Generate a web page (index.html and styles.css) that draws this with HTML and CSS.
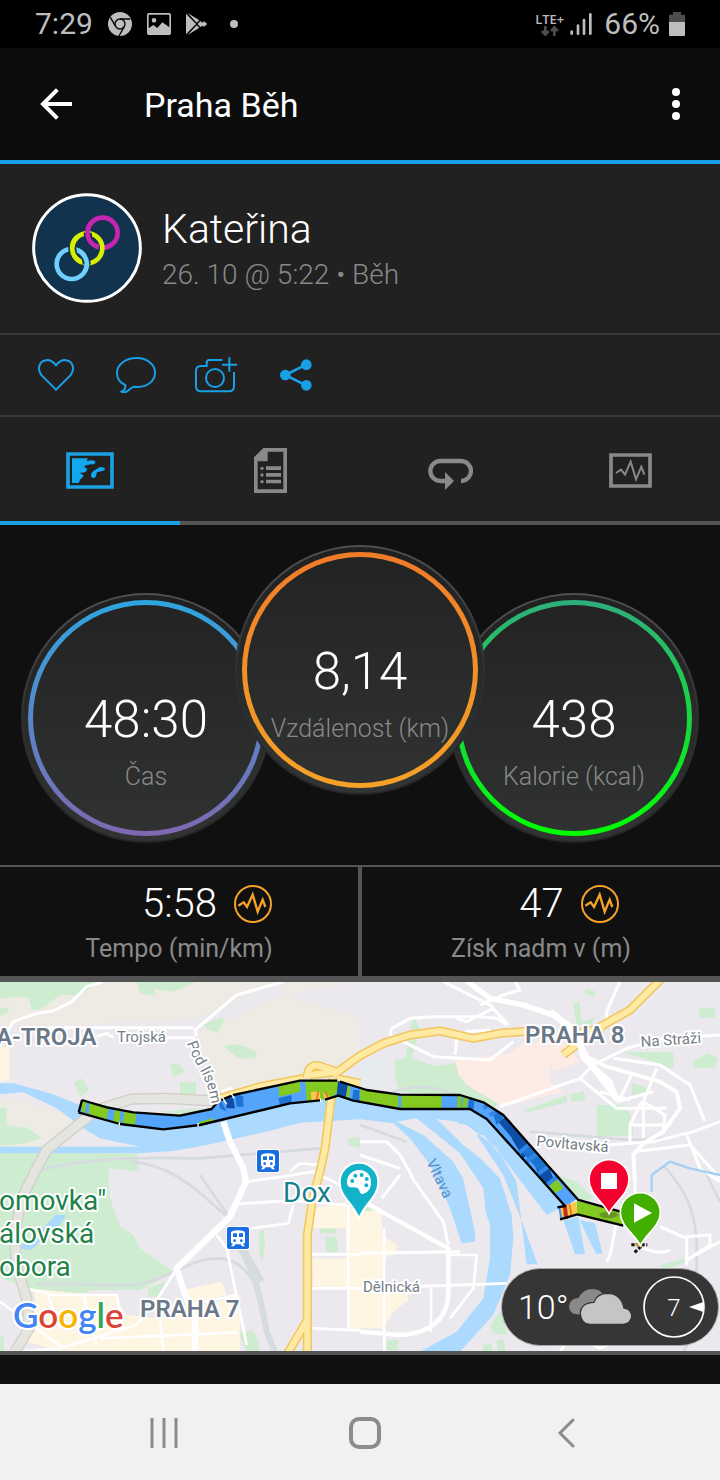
FILE: index.html
```html
<!DOCTYPE html>
<html lang="cs">
<head>
<meta charset="utf-8">
<meta name="viewport" content="width=device-width, initial-scale=1">
<title>Praha Běh</title>
<link rel="stylesheet" href="styles.css">
</head>
<body>
<div class="statusbar">
  <div class="status-left">
    <span class="clock">7:29</span>
    <svg width="24" height="24" viewBox="0 0 72 72"><circle cx="36" cy="36" r="36" fill="#bdbdbd"/><g fill="none" stroke="#000" stroke-width="4"><circle cx="36" cy="36" r="15"/><path d="M36 21H67M23 43L7 16M49 43L33 72"/></g></svg>
    <svg width="24" height="22" viewBox="0 0 72 66"><path fill="#bdbdbd" fill-rule="evenodd" d="M5 0H67Q72 0 72 5V61Q72 66 67 66H5Q0 66 0 61V5Q0 0 5 0ZM5 5V46L19 36L31 45L46 28L67 43V5ZM21 15a7 7 0 1 1 0 14a7 7 0 1 1 0-14Z"/></svg>
    <svg class="play" width="22" height="22" viewBox="0 0 66 66"><path fill="#bdbdbd" d="M0 2V64L30 33ZM5 0L32 29L40 22ZM5 66L32 37L40 44ZM43 24L35 33L43 42L49 38L54 41L64 33L54 25L49 29Z"/></svg>
    <span class="dot"></span>
  </div>
  <div class="status-right">
    <div class="network"><span>LTE+</span><svg width="18" height="10" viewBox="0 0 54 30"><path fill="none" stroke="#4d4d4d" stroke-width="8" d="M13 0V24M3 15L13 26L23 15M40 30V6M30 15L40 4L50 15"/></svg></div>
    <svg width="22" height="22" viewBox="0 0 66 66"><path fill="none" stroke="#bdbdbd" stroke-width="8" stroke-linecap="round" d="M5 56V62M24 38V62M42 21V62M61 4V62"/></svg>
    <span class="clock battery-text">66%</span>
    <svg width="16" height="24" viewBox="0 0 48 72"><path fill="#4d4d4d" d="M12 0H36V8H48V32H0V8H12Z"/><path fill="#bdbdbd" d="M0 30H48V69Q48 72 45 72H3Q0 72 0 69Z"/></svg>
  </div>
</div>

<header class="appbar">
  <button class="icon-button" aria-label="Zpět"><svg width="32" height="32" viewBox="0 0 96 96"><path fill="none" stroke="#fff" stroke-width="12" d="M96 48H10M52 5L9 48L52 91"/></svg></button>
  <h1>Praha Běh</h1>
  <button class="icon-button more" aria-label="Další"><svg width="8" height="32" viewBox="0 0 24 96"><g fill="#fff"><circle cx="12" cy="12" r="12"/><circle cx="12" cy="48" r="12"/><circle cx="12" cy="84" r="12"/></g></svg></button>
</header>

<main>
<section class="profile">
  <svg class="avatar" viewBox="0 0 330 330"><circle cx="165" cy="165" r="160" fill="#11334d" stroke="#fff" stroke-width="9"/>
    <g fill="none" stroke-width="14">
      <circle cx="212" cy="119" r="45" stroke="#c724b1"/>
      <path stroke="#11334d" stroke-width="24" d="M178 153A45 45 0 0 0 190 160M206 164A45 45 0 0 0 200 163"/>
      <circle cx="166" cy="166" r="45" stroke="#d6f000"/>
      <path stroke="#11334d" stroke-width="24" d="M167 119A45 45 0 0 0 178 149"/>
      <path stroke="#c724b1" d="M182 85A45 45 0 0 0 198 162"/>
      <circle cx="119" cy="213" r="45" stroke="#6fcfff"/>
      <path stroke="#11334d" stroke-width="24" d="M121 162A45 45 0 0 0 128 190"/>
      <path stroke="#d6f000" d="M137 131A45 45 0 0 0 148 207"/>
      <path stroke="#11334d" stroke-width="24" d="M164 215A45 45 0 0 0 156 187"/>
      <path stroke="#6fcfff" d="M138 172A45 45 0 0 1 160 232"/>
    </g></svg>
  <div class="who"><h2>Kateřina</h2><p>26. 10 @ 5:22 • Běh</p></div>
</section>

<div class="actions">
  <button class="action" aria-label="To se mi líbí"><svg width="36" height="32" viewBox="0 0 108 96"><path d="M54 92L11 49C-3 32 1 4 29 3C42 3 46 10 54 19C62 10 66 3 79 3C107 4 111 32 97 49Z"/></svg></button>
  <button class="action" aria-label="Komentář"><svg width="40" height="36" viewBox="0 0 120 108"><path d="M62 3C93 3 117 22 117 47C117 73 91 94 55 89C47 89 42 97 33 103C27 107 19 107 16 104C25 101 29 93 28 84C12 77 3 64 3 48C3 22 30 3 62 3Z"/></svg></button>
  <button class="action" aria-label="Přidat fotku"><svg width="42" height="36" viewBox="0 0 126 108"><path d="M82 9H43Q35 9 35 19V27H18Q3 27 3 42V88Q3 103 18 103H102Q117 103 117 88V45M103 1V44M81 23H126"/><circle cx="60" cy="63" r="27"/></svg></button>
  <button class="action" aria-label="Sdílet"><svg width="32" height="32" viewBox="0 0 96 96"><path stroke-width="8" d="M78 17L16 48L78 79"/><g fill="#18a0e6" stroke="none"><circle cx="16" cy="48" r="16"/><circle cx="79" cy="17" r="16"/><circle cx="79" cy="79" r="16"/></g></svg></button>
</div>

<nav class="tabs">
  <button class="tab active" aria-label="Mapa"><svg width="48" height="37" viewBox="0 0 144 111"><path fill="none" stroke="#1ba1e2" stroke-width="11" d="M6 6H138V105H6Z"/><path fill="#12a8f0" d="M18 19H65L62 27L78 25Q89 26 88 32Q85 38 75 37L60 40L54 44L64 51L59 60L41 63L53 70L49 77L43 82L38 93H18ZM75 72Q74 61 86 55L101 46Q117 44 117 51Q116 57 108 57L93 61L89 74Q84 80 78 77Z"/></svg></button>
  <button class="tab" aria-label="Statistiky"><svg width="33" height="45" viewBox="0 0 99 135"><path fill="#898989" fill-rule="evenodd" d="M0 28L28 0H99V135H0ZM11 40V124H88V11H41V40Z"/><path fill="#898989" d="M36 55H81V66H36ZM36 75H81V86H36ZM36 95H81V106H36Z"/><g fill="#898989"><circle cx="24" cy="61" r="5"/><circle cx="24" cy="81" r="5"/><circle cx="24" cy="101" r="5"/></g></svg></button>
  <button class="tab" aria-label="Okruhy"><svg width="45" height="38" viewBox="0 0 135 114"><path fill="none" stroke="#898989" stroke-width="13" d="M54 87H37A30 30 0 0 1 37 27H99A30 30 0 0 1 99 87"/><path fill="#898989" d="M51 60L78 87L51 114Z"/></svg></button>
  <button class="tab" aria-label="Grafy"><svg width="43" height="35" viewBox="0 0 129 105"><path fill="none" stroke="#898989" stroke-width="11" d="M6 6H123V99H6Z"/><path fill="none" stroke="#898989" stroke-width="6" d="M21 60L36 50L48 65L65 26L81 79L97 41L106 65"/></svg></button>
</nav>

<section class="gauges">
  <div class="gauge time"><div class="ring"><strong>48:30</strong><span>Čas</span></div></div>
  <div class="gauge distance"><div class="ring"><strong>8,14</strong><span>Vzdálenost (km)</span></div></div>
  <div class="gauge calories"><div class="ring"><strong>438</strong><span>Kalorie (kcal)</span></div></div>
</section>

<section class="stats">
  <div class="stat"><div class="stat-value"><span>5:58</span><svg width="38" height="38" viewBox="0 0 114 114"><g fill="none" stroke="#f5a12a"><circle cx="57" cy="57" r="54" stroke-width="6"/><path stroke-width="7" d="M13 62L29 52L39 66L56 29L71 80L86 44L94 66"/></g></svg></div><p>Tempo (min/km)</p></div>
  <div class="stat"><div class="stat-value"><span>47</span><svg width="38" height="38" viewBox="0 0 114 114"><g fill="none" stroke="#f5a12a"><circle cx="57" cy="57" r="54" stroke-width="6"/><path stroke-width="7" d="M13 62L29 52L39 66L56 29L71 80L86 44L94 66"/></g></svg></div><p>Získ nadm v (m)</p></div>
</section>

<section class="map">
<svg class="map-art" viewBox="0 0 720 369" preserveAspectRatio="xMidYMid slice">
<defs>
  <clipPath id="band"><path d="M245 375L400 412L540 422L640 400L655 378L700 360L900 317H1012L1100 345L1200 360L1380 362L1450 382L1510 420L1660 590L1730 672L1695 695L1590 575L1460 432L1410 404L1200 402L1060 377L1015 362L960 376L870 385L800 402L600 450L490 463L360 447L235 412Z"/></clipPath>
  <g id="station"><rect x="-3" y="-3" width="72" height="72" rx="8" fill="#fff"/><rect width="66" height="66" rx="6" fill="#1a6fe0"/><path fill="#fff" d="M12 18Q12 10 33 10Q54 10 54 18V46Q54 50 48 50L54 58H45L41 52H25L21 58H12L18 50Q12 50 12 46Z"/><path fill="#1a6fe0" d="M18 19H30V30H18ZM36 19H48V30H36Z"/><circle cx="23" cy="41" r="4" fill="#1a6fe0"/><circle cx="43" cy="41" r="4" fill="#1a6fe0"/></g>
  <path id="pod" d="M187 61C193 82 208 92 212 126"/>
</defs>
<rect width="720" height="369" fill="#ebe9ed"/>
<g transform="scale(.33333) translate(0 -21)">
  <path fill="#eeebe5" d="M0 20H820L600 130L250 150L0 150ZM600 170L850 60L1080 130V260L920 300L660 350L590 230ZM0 370L110 390L230 430L120 530H0ZM840 20H1080L850 60Z"/>
  <path fill="#e6ebee" d="M1080 255L1170 250V340H1080Z"/>
  <g fill="#ceeccf">
    <path d="M0 20H300L240 60H180L120 105H95L85 65L0 70ZM0 100L28 98L20 115L0 122ZM410 20H590L520 50L460 42L470 62L420 55ZM610 150Q640 130 675 128L655 172L625 165ZM672 215Q700 195 770 230L765 250L715 250ZM508 265L540 270L555 290L520 308ZM540 322H588V360H540ZM222 325L245 310L268 345L240 365ZM0 400L20 395V450L85 460L125 490L80 505L0 512ZM490 410L580 400L620 405L590 425ZM1045 490L1080 485V520L1045 510Z"/>
    <path d="M0 535H410L418 590L330 580L325 610L330 670L360 755L400 780L420 820L520 890L470 920L420 945L280 945L240 955L80 940L0 905ZM445 938L500 920L470 965H445ZM0 1085H12V1130H0Z"/>
    <path d="M1185 255L1215 250L1240 120L1260 160L1235 250L1300 272L1370 265L1400 320L1500 380L1480 400L1380 365L1200 350L1185 310ZM1310 440L1380 435L1370 470L1340 450ZM1755 40L1790 50L1780 65L1755 55ZM1720 85L1738 80L1745 140L1790 125L1770 150L1730 150ZM1575 405L1700 360V382L1575 415ZM1710 360L1750 348L1758 375L1715 382ZM2097 100H2145V128H2097ZM1790 390H1875L1900 440V480L1790 485ZM1860 230L2020 232V282L1965 260ZM2078 260L2125 235L2155 250L2145 278H2080ZM1895 325L1950 340L1930 360H1895Z"/>
    <path d="M960 752H1008V775H960ZM975 785H1010L1015 830L980 832ZM778 765H792L795 820L786 860L778 830ZM660 1055H685V1075H660ZM715 1070L760 1068L775 1100L780 1130H740ZM1080 690L1125 705L1120 725L1080 710ZM1470 1050L1510 1000L1520 1080L1480 1075ZM1160 1095H1195V1125H1160ZM1448 1110L1475 1105V1130H1450ZM1490 1095L1512 1092L1518 1130H1495ZM1640 590L1730 620L1780 670L1740 680L1700 660ZM1980 870L2050 852L2060 860L1990 885Z"/>
  </g>
  <path fill="#fdebe5" d="M1365 255L1530 235L1570 205L1680 190L1740 260L1660 290L1650 260V320L1690 350L1510 395L1400 330L1375 300Z"/>
  <g fill="#fef5e2">
    <path d="M0 215H28V315L0 320ZM100 942L345 965L380 1020L480 1030L720 960V1130H180L50 1090L110 1000ZM550 945L665 920L680 960L570 985ZM940 700L1040 680V760H940ZM938 850H1080V970H1045V935H940ZM1035 700H1080V1065L1045 1060ZM1080 710L1145 705V780L1190 810V830L1155 850V940L1225 960V975L1180 1010L1150 1060H1080Z"/>
  </g>
  <g fill="#acdaff">
    <path d="M0 325H40L150 355L240 390L500 425L900 360L1100 365L1430 390L1480 430L1600 570L1700 690L1640 720L1510 550L1450 480H1430L1510 600L1570 750L1613 868H1580L1550 620L1490 520L1400 450L1340 440L1410 520L1500 610L1535 720L1540 790L1530 900L1480 1020L1380 1130H1260L1370 1070L1450 970L1470 850V750L1440 660L1350 540L1280 460L1200 440L1290 480L1380 570L1425 770V800L1385 805L1350 700L1290 570L1230 490L1180 445L1080 433L900 443L800 470L620 510L520 528L420 535H0V515H420L300 490L250 460L170 400L70 352L0 358Z"/>
    <path d="M1690 735L1735 725L1755 838H1725ZM1738 735L1785 745L1808 836H1788ZM50 820L130 760L165 720H198L170 765L130 790L95 825Z"/>
  </g>
  <path fill="#ebe9ed" d="M1190 440L1250 430L1380 535L1450 640L1460 750L1430 680L1360 560L1270 480ZM1310 432L1370 440L1430 510L1440 550L1390 510Z"/>
  <g fill="none" stroke="#d5dbde" stroke-width="8">
    <path d="M100 590C250 550 400 545 600 550L960 520M390 560C540 570 620 680 690 730M600 600L690 730M110 925Q300 930 410 930C540 900 570 850 650 850Q720 850 760 920M1080 450L1220 500M1410 385Q1300 310 1180 350M1590 470L1890 495L2000 490M1990 570C2050 640 2090 700 2090 820V1060L2050 1130M2110 580L2160 680"/>
    <path stroke-width="18" d="M710 800C765 890 780 960 800 1070L825 1130M730 820L785 920"/>
  </g>
  <g fill="none" stroke="#fff" stroke-width="9" stroke-linejoin="round">
    <path d="M0 205L40 140L110 115L160 108L215 80L260 35L310 20M590 185L585 165L710 60L850 20M140 158H580M290 185L320 175L340 188M490 188H580L590 230M1170 180L1175 160L1230 130L1300 125H1440L1490 130L1520 150M1170 180L1300 245L1470 255L1540 200M1365 240L1370 190L1400 170L1470 165M1330 20L1470 90L1525 150M1440 90L1510 60L1560 45L1545 20M1480 100L1400 140L1370 130"/>
    <path stroke-width="16" d="M1390 10L1470 70L1570 90L1660 120L1730 170L1750 250L1830 320L1850 375"/>
    <path stroke-width="12" d="M1770 250L1820 275L1980 320L2030 350L2040 400L1990 470L1930 505L1900 540L1905 620"/>
    <path d="M1820 150L1820 110L1860 20M1780 270L1880 220L1990 190L2160 180M1780 270L1740 310L1500 395M1840 250L1980 270L2070 330L2115 440M1740 310L1850 400H2000M1900 290L1855 380M1970 280L1930 380V490M1850 380L1960 350M1925 380L1890 450V510M1930 380L1995 420L1990 470M1890 450H1990M1800 350L1890 375M1820 510L1960 500L2080 470L2160 440M1900 530L2070 510L2160 610M2060 480L2100 580L2160 620M1905 620V700L1850 740L1830 840L1820 860M1980 755L2060 790V870M2060 785L2130 780V810L2060 855L2160 800M1930 820Q1980 840 2010 825M1080 500H1160L1200 540L1240 610M1200 600L1145 670M1080 540L1200 580M1380 830L1080 835M1230 600L1330 740L1345 810"/>
    <path stroke-width="19" d="M670 440L690 500L730 580L738 620L690 725L530 880L555 960L585 1030V1130"/>
    <path stroke-width="13" d="M1100 685L1345 820V950Q1345 1070 1200 1080L1080 1070"/>
    <path d="M740 620L850 605L940 590L1040 640M870 590L900 565L960 570M650 780L680 820L730 1060L740 1110M530 880L480 960L410 1050L180 1120L60 1130M0 980L190 1120M755 760L865 745L880 690M710 687L870 677L1040 690M665 350L690 340L720 365M570 990L710 960M932 940H1080L1520 925M936 838H1080M1045 690V1060M938 1060L1080 1066M1152 760V1070M1293 940V1070M1345 840H1430L1420 940L1350 1030M1153 1065V1130M80 940L160 960L350 960L370 1060M140 950L180 1060M250 960L290 1110M480 1030L490 1130M300 1090L715 1072M1680 1130L1700 1100H1760L1800 1120L1900 1080" stroke-width="8"/>
  </g>
  <g fill="none" stroke-linejoin="round">
    <path stroke="#d4ceca" stroke-width="34" d="M640 378L500 370L395 372L290 405L220 460L140 525L105 590L65 670L45 770L48 870L80 970L88 1060L45 1130"/>
    <path stroke="#e5e5df" stroke-width="26" d="M640 378L500 370L395 372L290 405L220 460L140 525L105 590L65 670L45 770L48 870L80 970L88 1060L45 1130"/>
    <path stroke="#f2c55d" stroke-width="27" d="M1000 300L1080 242L1150 205L1230 180L1320 168L1420 190L1500 175L1600 167M1750 190L1810 150L1890 105L1985 10M1690 240L1740 200L1750 170L1810 160M1010 310L1080 325M920 310Q925 260 965 275L1010 290L930 300M1000 310L990 400L975 520L960 590L938 670L922 780V1130M922 1035L860 1140M660 370L780 335L910 310"/>
    <path stroke="#ffeaa3" stroke-width="18" d="M1000 300L1080 242L1150 205L1230 180L1320 168L1420 190L1500 175L1600 167M1750 190L1810 150L1890 105L1985 10M1690 240L1740 200L1750 170L1810 160M1010 310L1080 325M920 310Q925 260 965 275L1010 290L930 300M1000 310L990 400L975 520L960 590L938 670L922 780V1130M922 1035L860 1140M660 370L780 335L910 310"/>
    <path stroke="#fff" stroke-width="20" d="M1650 110L1715 160L1760 250L1790 290L1850 370"/>
    <path stroke="#a2d0f6" stroke-width="7" d="M1955 600L2010 560L2070 580L2160 600M1955 600V650"/>
  </g>
  <g clip-path="url(#band)">
    <rect x="220" y="300" width="1540" height="420" fill="#55a4fb"/>
    <g fill="#83c91f"><path d="M248 370L260 380L252 425H243ZM270 375L328 390L318 440L265 425ZM345 400H362L358 450H338ZM375 400H410L405 450L368 445ZM600 440L640 430V450L590 455ZM835 320L900 300V350L838 365ZM915 300H1015V350L990 372L920 380ZM1040 330L1052 335L1045 380L1032 360ZM1080 330L1195 350V410H1080ZM1204 350H1325V410H1204ZM1372 355H1384V410H1372ZM1392 355L1405 360L1398 410H1385ZM1640 620L1665 605L1690 640L1665 655Z"/></g>
    <path fill="#0d4ea6" d="M670 350L700 370L705 400L680 400ZM1015 310L1045 320L1035 380L1010 360ZM1495 440L1520 425L1570 470L1545 500ZM1535 490L1560 470L1600 520L1570 550ZM1600 560L1640 560L1660 610L1630 630Z"/>
    <path fill="#1e73d2" d="M655 370L665 380L680 410L660 400ZM705 355L730 365V395H710ZM835 370L875 360V385L840 390ZM1060 345H1078V390H1055ZM1410 355L1425 360L1420 410H1402ZM1480 420L1500 405L1510 430L1490 450ZM1565 530L1590 510L1650 570L1620 590Z"/>
    <path stroke="#3287e8" stroke-width="12" d="M1450 400L1500 370M1470 420L1530 385M1555 535L1610 490M1580 560L1640 515M1610 600L1680 550M1635 635L1690 590"/>
    <path fill="#f9c74c" d="M932 350H960V375H935ZM970 350L990 365L975 380Z"/><path stroke="#e86d25" stroke-width="5" d="M955 350L950 376M975 350L985 370"/>
  </g>
  <path fill="#83c91f" d="M1730 677L1870 713V750L1730 717Z"/><path fill="#f9c74c" d="M1680 695L1728 680L1733 715L1683 733Z"/>
  <path stroke="#c92c1c" stroke-width="12" d="M1694 690L1699 732"/><path stroke="#e86d25" stroke-width="5" d="M1708 688L1715 725"/><path stroke="#3e91ee" stroke-width="6" d="M1678 697L1684 732"/>
  <path fill="none" stroke="#000" stroke-width="7" stroke-linejoin="round" d="M245 375L320 397L400 412L540 422L635 402L655 378L700 360L900 317H1012M1020 320L1100 345L1200 359L1380 360L1450 382L1510 420L1660 590L1735 675L1870 712M235 412L360 447L490 463L600 450L800 402L870 385L960 376M975 374L1015 362L1060 377L1200 402H1410L1460 432L1590 575L1695 693L1672 697M1680 733L1732 718L1870 752M246 375L236 412"/>
  <path stroke="#fff" stroke-width="4" d="M358 442V451M594 444V455M667 366L680 388M694 356L702 370M962 370V382"/>
  <path stroke="#111" stroke-width="9" stroke-dasharray="10 5" d="M1894 809H1942M1904 832L1930 808"/><path stroke="#bda94b" stroke-width="7" d="M1904 807L1927 813"/>
  <ellipse cx="1826" cy="720" rx="28" ry="10" fill="#333" opacity=".35"/>
  <path fill="#f5002f" stroke="#fff" stroke-width="5" d="M1827 716C1810 680 1767 657 1767 614A60 60 0 0 1 1887 614C1887 657 1844 680 1827 716Z"/><path fill="#fff" d="M1803 594H1851V642H1803Z"/>
  <path fill="#42ae00" stroke="#fff" stroke-width="5" d="M1921 812C1904 776 1861 754 1861 713A60 60 0 0 1 1981 713C1981 754 1938 776 1921 812Z"/><path fill="#fff" d="M1902 685L1956 714L1902 743Z"/>
  <path fill="#13b2c9" stroke="#fff" stroke-width="6" d="M1077 732C1062 687 1019 667 1019 621A58 58 0 0 1 1135 621C1135 667 1092 687 1077 732Z"/>
  <path fill="#fff" d="M1077 585C1100 585 1113 600 1113 622C1113 642 1102 655 1087 657C1078 657 1080 642 1071 638C1058 637 1041 641 1041 621C1041 600 1057 585 1077 585Z"/><g fill="#13b2c9"><circle cx="1057" cy="618" r="6"/><circle cx="1066" cy="602" r="6"/><circle cx="1085" cy="600" r="6"/><circle cx="1100" cy="612" r="6"/><circle cx="1099" cy="631" r="6"/></g>
  <use href="#station" x="771" y="525"/><use href="#station" x="681" y="756"/>
</g>
<g class="labels">
  <text class="district" x="-4" y="63">A-TROJA</text><text class="district" x="525" y="61">PRAHA 8</text><text class="district" x="140" y="335">PRAHA 7</text>
  <text class="street" x="117" y="60">Trojská</text><text class="street"><textPath href="#pod">Pod lísem</textPath></text>
  <text class="street" x="641" y="65" transform="rotate(-4 641 65)">Na Stráži</text>
  <text class="street" x="536" y="164" transform="rotate(5 536 164)">Povltavská</text>
  <text class="street" x="363" y="310">Dělnická</text>
  <text class="street river" x="426" y="180" transform="rotate(64 426 180)">Vltava</text>
  <text class="park" x="-1" y="228">omovka"</text><text class="park" x="-1" y="261">álovská</text><text class="park" x="-1" y="294">obora</text>
  <text class="poi" x="283" y="220">Dox</text>
  <text class="google" x="13" y="346"><tspan fill="#4285f4">G</tspan><tspan fill="#db4437">o</tspan><tspan fill="#f4b400">o</tspan><tspan fill="#4285f4">g</tspan><tspan fill="#34a853">l</tspan><tspan fill="#db4437">e</tspan></text>
</g>
</svg>
<div class="weather">
  <span>10°</span>
  <svg width="62" height="36" viewBox="0 0 186 108"><path fill="#898989" d="M0 53Q1 29 29 26Q42 0 71 0Q94 0 103 18L75 40L35 58L34 76Q2 78 0 53Z"/><path fill="#c5c5c5" stroke="#363636" stroke-width="4" d="M62 106Q37 104 34 75Q34 42 75 40Q83 13 117 13Q156 14 165 57Q188 60 188 83Q185 105 162 106Z"/></svg>
  <svg class="compass" width="62" height="62" viewBox="0 0 186 186"><circle cx="93" cy="93" r="90" fill="none" stroke="#fff" stroke-width="5"/><path fill="#fff" d="M138 93L181 78V108Z"/><text class="wind" x="93" y="119" text-anchor="middle">7</text></svg>
</div>
</section>
</main>

<nav class="navbar">
  <button aria-label="Poslední aplikace"><svg width="28" height="32" viewBox="0 0 28 32"><path d="M2 1V31M14 1V31M26 1V31"/></svg></button>
  <button aria-label="Domů"><svg width="32" height="32" viewBox="0 0 32 32"><rect x="2" y="2" width="28" height="28" rx="8" stroke-width="4"/></svg></button>
  <button aria-label="Zpět"><svg width="18" height="30" viewBox="0 0 18 30"><path stroke-linecap="round" d="M16 2L3 15L16 28"/></svg></button>
</nav>
</body>
</html>
```

FILE: styles.css
```css
* { box-sizing: border-box; }
body { margin: 0; min-height: 100vh; display: flex; flex-direction: column; background: #101010; color: #fff; font-family: Roboto, "Noto Sans", sans-serif; }
h1, h2, p { margin: 0; font-weight: 400; }
button { margin: 0; padding: 0; border: 0; background: none; color: inherit; font: inherit; display: flex; align-items: center; justify-content: center; }
svg { display: block; flex: none; }
main { flex: 1; }

.statusbar { height: 48px; padding: 0 35px; background: #000; color: #bdbdbd; display: flex; align-items: center; justify-content: space-between; }
.status-left { display: flex; align-items: center; gap: 15px; }
.status-right { display: flex; align-items: center; gap: 6px; }
.clock { font-size: 30px; line-height: 50px; }
.battery-text { padding: 0 3px 0 6px; }
.dot { width: 8px; height: 8px; margin-left: 7px; border-radius: 50%; background: #bdbdbd; }
.network { display: flex; flex-direction: column; align-items: center; font: 600 13px/14px "Open Sans", sans-serif; }

.appbar { height: 116px; padding: 0 36px 0 40px; background: #0c0c0c; border-bottom: 4px solid #18a0e6; display: flex; align-items: center; }
.appbar h1 { flex: 1; padding: 2px 0 0 72px; font-size: 34px; line-height: 40px; }
.icon-button { height: 48px; }
.more { width: 16px; }

.profile { padding: 29px 32px 30px; background: #212121; border-bottom: 2px solid #383838; display: flex; align-items: center; gap: 20px; }
.avatar { width: 110px; height: 110px; }
.who { padding-top: 6px; }
.profile h2 { font-size: 41px; line-height: 48px; font-weight: 300; }
.profile p { font-size: 28px; line-height: 44px; font-weight: 300; color: #898989; }

.actions { height: 82px; padding: 0 16px; background: #212121; border-bottom: 2px solid #383838; display: flex; }
.action { width: 80px; height: 80px; }
.action svg { fill: none; stroke: #18a0e6; stroke-width: 6px; }

.tabs { background: #212121; display: grid; grid-template-columns: repeat(4, 1fr); }
.tab { height: 108px; padding-top: 3px; border-bottom: 4px solid #555; }
.tab.active { border-bottom-color: #1ba1e2; }

.gauges { height: 340px; padding-top: 20px; display: flex; justify-content: center; align-items: flex-start; }
.gauge { width: 250px; height: 250px; margin-top: 48px; padding: 5px; border: 2px solid transparent; border-radius: 50%; background: linear-gradient(#202020, #323434) padding-box, linear-gradient(#505050, #303030 50%, #262626) border-box; }
.gauge.distance { position: relative; margin: 0 -36px; }
.ring { height: 100%; padding-top: 86px; border: 5px solid transparent; border-radius: 50%; display: flex; flex-direction: column; align-items: center; white-space: nowrap; }
.time .ring { background: linear-gradient(#232323, #303232) padding-box, linear-gradient(#2ea5df, #7f68b1) border-box; }
.distance .ring { background: linear-gradient(#232323, #303232) padding-box, linear-gradient(#f07c28, #f5a227) border-box; }
.calories .ring { background: linear-gradient(#232323, #303232) padding-box, linear-gradient(#2fae7c, #0f0) border-box; }
.ring strong { font-size: 51px; line-height: 58px; font-weight: 300; }
.ring span { font-size: 25px; line-height: 56px; font-weight: 300; color: #898989; }

.stats { border-top: 2px solid #555; border-bottom: 6px solid #555; display: grid; grid-template-columns: 1fr 1fr; }
.stat { height: 109px; padding-top: 16px; font-weight: 300; text-align: center; }
.stat:first-child { border-right: 2px solid #555; }
.stat:last-child { border-left: 2px solid #555; }
.stat-value { padding-left: 56px; display: flex; justify-content: center; align-items: center; gap: 17px; font-size: 40px; line-height: 42px; }
.stat p { font-size: 25px; line-height: 48px; color: #898989; }

.map { position: relative; border-bottom: 4px solid #555; }
.map-art { width: 100%; height: auto; }
.labels { stroke: #fff; stroke-width: 4px; stroke-linejoin: round; paint-order: stroke; }
.district { font-size: 24px; font-weight: 600; fill: #6b7888; }
.street { font-size: 15px; fill: #747e87; }
.river { fill: #568fc8; stroke: none; }
.park { font-size: 28px; fill: #23814a; }
.poi { font-size: 28px; fill: #17808f; }
.google { font-family: Lato, sans-serif; font-size: 35px; font-weight: 600; }
.weather { position: absolute; right: 1px; bottom: 5px; width: 218px; height: 78px; padding: 0 13px 0 16px; border: 1px solid #aaa; border-radius: 39px; background: #363636; display: flex; align-items: center; font-size: 34px; font-weight: 300; }
.compass { margin-left: auto; }
.wind { font-size: 72px; font-weight: 300; fill: #fff; }

.navbar { height: 96px; padding: 2px 54px 0 63px; background: #f1f1f1; display: grid; grid-template-columns: repeat(3, 1fr); }
.navbar svg { fill: none; stroke: #8c8c8c; stroke-width: 3px; }
```
